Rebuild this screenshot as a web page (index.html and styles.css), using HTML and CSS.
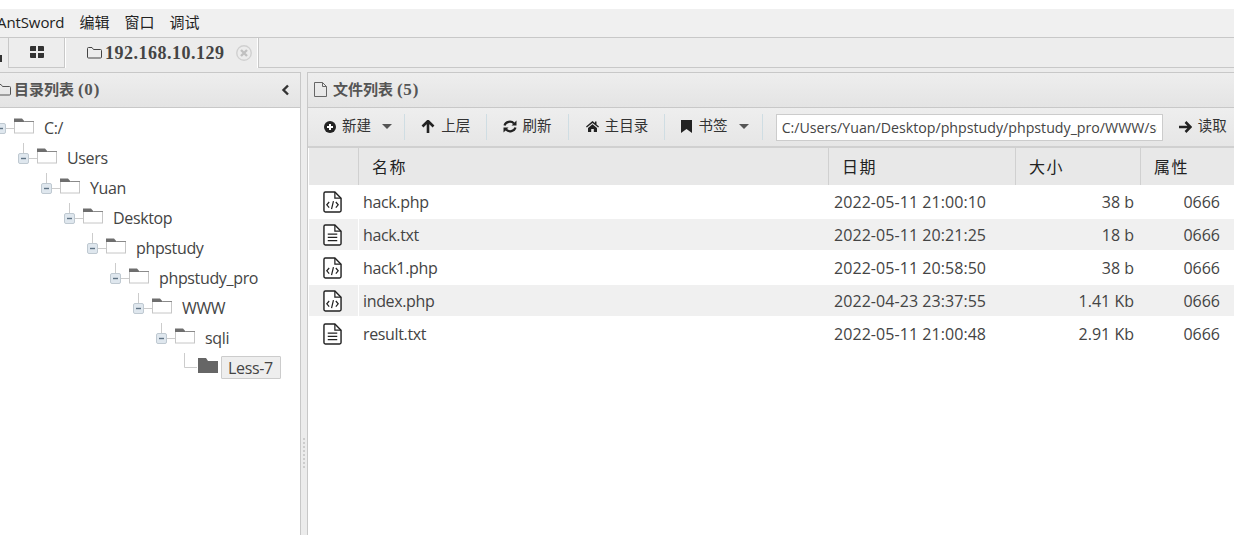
FILE: index.html
```html
<!DOCTYPE html>
<html lang="zh-CN">
<head>
<meta charset="utf-8">
<title>AntSword</title>
<link rel="stylesheet" href="styles.css">
</head>
<body>
<svg class="defs" width="0" height="0" aria-hidden="true">
  <symbol id="folder" viewBox="0 0 20 16">
    <rect x="0.500" y="3.500" width="19" height="11.500" fill="#fff" stroke="#c6c6c6"/>
    <path d="M0 4V0.500h8l3 3.500z" fill="#6e6e6e"/>
    <path d="M11 3.500h9" stroke="#8a8a8a"/>
    <path d="M1 15.500h19" stroke="#e2e2e2"/>
  </symbol>
  <symbol id="expander" viewBox="0 0 19 30">
    <path d="M5.500 0v10M10 15.500h9" stroke="#ccc" fill="none"/>
    <rect x="0.500" y="10.500" width="10" height="10" rx="1.500" fill="#dfe7ee" stroke="#bfc9d1"/>
    <path d="M3 15.500h5" stroke="#5f7384" stroke-width="1.400"/>
  </symbol>
  <symbol id="expander0" viewBox="0 0 19 30">
    <path d="M10 15.500h9" stroke="#ccc" fill="none"/>
    <rect x="0.500" y="10.500" width="10" height="10" rx="1.500" fill="#dfe7ee" stroke="#bfc9d1"/>
    <path d="M3 15.500h5" stroke="#5f7384" stroke-width="1.400"/>
  </symbol>
  <symbol id="file-code" viewBox="0 0 20 23">
    <path d="M1 2.500a1.500 1.500 0 0 1 1.500-1.500H12.500L19 7.500V20.500a1.500 1.500 0 0 1-1.500 1.500H2.500A1.500 1.500 0 0 1 1 20.500z" fill="#fff" stroke="#222" stroke-width="1.500"/>
    <path d="M12.500 1v6.500H19" fill="none" stroke="#222" stroke-width="1.300"/>
    <path d="M6.500 11.500 4 14.500l2.500 3M13.500 11.500l2.500 3-2.500 3M11 10.500l-2 8.500" fill="none" stroke="#222" stroke-width="1.300"/>
  </symbol>
  <symbol id="file-text" viewBox="0 0 20 23">
    <path d="M1 2.500a1.500 1.500 0 0 1 1.500-1.500H12.500L19 7.500V20.500a1.500 1.500 0 0 1-1.500 1.500H2.500A1.500 1.500 0 0 1 1 20.500z" fill="#fff" stroke="#222" stroke-width="1.500"/>
    <path d="M12.500 1v6.500H19" fill="none" stroke="#222" stroke-width="1.300"/>
    <path d="M5 10.500h10M5 14h10M5 17.500h10" fill="none" stroke="#222" stroke-width="1.300"/>
  </symbol>
</svg>

<header class="menubar">
  <span class="menu-item menu-app">AntSword</span>
  <span class="menu-item">编辑</span>
  <span class="menu-item">窗口</span>
  <span class="menu-item">调试</span>
</header>

<nav class="tabs">
  <div class="tab tab-stub">
    <svg class="stub-icon" width="3" height="7" viewBox="0 0 3 7"><path d="M0 0h2v7H0z" fill="#333"/></svg>
  </div>
  <div class="tab tab-grid">
    <svg width="14" height="12" viewBox="0 0 14 12"><path d="M0 1a1 1 0 0 1 1-1h5v5H0zM8 0h5a1 1 0 0 1 1 1v4H8zM0 7h6v5H1a1 1 0 0 1-1-1zM8 7h6v4a1 1 0 0 1-1 1H8z" fill="#333"/></svg>
  </div>
  <div class="tab tab-active">
    <svg class="tab-folder" width="15" height="12" viewBox="0 0 15 12"><path d="M.5 10V1.500a1 1 0 0 1 1-1h3.500l1.500 2h7a1 1 0 0 1 1 1V10a1 1 0 0 1-1 1h-12a1 1 0 0 1-1-1z" fill="none" stroke="#444"/></svg>
    <span class="tab-title">192.168.10.129</span>
    <svg class="tab-close" width="16" height="16" viewBox="0 0 16 16"><circle cx="8" cy="8" r="7.250" fill="none" stroke="#d0d0d0" stroke-width="1.400"/><path d="M5 5l6 6M11 5l-6 6" stroke="#c0c0c0" stroke-width="2.400"/></svg>
  </div>
  <div class="tab-rest"></div>
</nav>

<main class="workspace">
  <section class="tree-panel">
    <div class="panel-head tree-head">
      <svg class="head-icon" width="15" height="12" viewBox="0 0 15 12"><path d="M.5 10V1.500a1 1 0 0 1 1-1h3.500l1.500 2h7a1 1 0 0 1 1 1V10a1 1 0 0 1-1 1h-12a1 1 0 0 1-1-1z" fill="none" stroke="#555"/></svg>
      <span class="head-title">目录列表 <span class="head-count">(0)</span></span>
      <svg class="collapse" width="9" height="12" viewBox="0 0 9 12"><path d="M7 1.500 2.500 6 7 10.500" fill="none" stroke="#333" stroke-width="2.400"/></svg>
    </div>
    <ul class="tree">
      <li>
        <div class="node"><svg class="exp" width="19" height="30"><use href="#expander0"/></svg><svg class="fld" width="20" height="16"><use href="#folder"/></svg><span class="label">C:/</span></div>
        <ul><li>
          <div class="node"><svg class="exp" width="19" height="30"><use href="#expander"/></svg><svg class="fld" width="20" height="16"><use href="#folder"/></svg><span class="label">Users</span></div>
          <ul><li>
            <div class="node"><svg class="exp" width="19" height="30"><use href="#expander"/></svg><svg class="fld" width="20" height="16"><use href="#folder"/></svg><span class="label">Yuan</span></div>
            <ul><li>
              <div class="node"><svg class="exp" width="19" height="30"><use href="#expander"/></svg><svg class="fld" width="20" height="16"><use href="#folder"/></svg><span class="label">Desktop</span></div>
              <ul><li>
                <div class="node"><svg class="exp" width="19" height="30"><use href="#expander"/></svg><svg class="fld" width="20" height="16"><use href="#folder"/></svg><span class="label">phpstudy</span></div>
                <ul><li>
                  <div class="node"><svg class="exp" width="19" height="30"><use href="#expander"/></svg><svg class="fld" width="20" height="16"><use href="#folder"/></svg><span class="label">phpstudy_pro</span></div>
                  <ul><li>
                    <div class="node"><svg class="exp" width="19" height="30"><use href="#expander"/></svg><svg class="fld" width="20" height="16"><use href="#folder"/></svg><span class="label">WWW</span></div>
                    <ul><li>
                      <div class="node"><svg class="exp" width="19" height="30"><use href="#expander"/></svg><svg class="fld" width="20" height="16"><use href="#folder"/></svg><span class="label">sqli</span></div>
                      <ul><li>
                        <div class="node node-leaf">
                          <svg class="exp" width="19" height="30" viewBox="0 0 19 30"><path d="M5.500 0v14.500H18" fill="none" stroke="#ccc"/></svg>
                          <svg class="fld-solid" width="20" height="16" viewBox="0 0 20 16"><path d="M0 15V0h8l2 3h10v12z" fill="#666"/></svg>
                          <span class="label label-selected">Less-7</span>
                        </div>
                      </li></ul>
                    </li></ul>
                  </li></ul>
                </li></ul>
              </li></ul>
            </li></ul>
          </li></ul>
        </li></ul>
      </li>
    </ul>
  </section>

  <div class="splitter"><span class="grip"></span></div>

  <section class="file-panel">
    <div class="panel-head file-head">
      <svg class="head-icon" width="13" height="15" viewBox="0 0 13 15"><path d="M.5.500h8l4 4v10h-12zM8.500.500v4h4" fill="none" stroke="#666"/></svg>
      <span class="head-title">文件列表 <span class="head-count">(5)</span></span>
    </div>
    <div class="toolbar">
      <div class="tool tool-caret tool-new">
        <svg width="12" height="12" viewBox="0 0 12 12"><circle cx="6" cy="6" r="6" fill="#222"/><path d="M6 3v6M3 6h6" stroke="#fff" stroke-width="2"/></svg>
        <span>新建</span><i class="caret"></i>
      </div>
      <div class="tool">
        <svg width="14" height="13" viewBox="0 0 14 13"><path d="M7 1v12M1.500 6.500 7 1l5.500 5.500" fill="none" stroke="#222" stroke-width="2.600"/></svg>
        <span>上层</span>
      </div>
      <div class="tool tool-refresh">
        <svg width="14" height="13" viewBox="0 0 14 13"><path d="M1.500 5.500A5.500 5 0 0 1 11 3.500M12.500 7.500A5.500 5 0 0 1 3 9.500" fill="none" stroke="#222" stroke-width="2.200"/><path d="M13.500.500v5h-5zM.5 12.500v-5h5z" fill="#222"/></svg>
        <span>刷新</span>
      </div>
      <div class="tool tool-home">
        <svg width="13" height="11" viewBox="0 0 13 11"><path d="M6.500 0 0 5.500l.8 1L6.500 2l5.700 4.500.8-1L10.500 3.400V.5H9v1.600z" fill="#222"/><path d="M2 7 6.500 3.200 11 7v4H7.800V8H5.200v3H2z" fill="#222"/></svg>
        <span>主目录</span>
      </div>
      <div class="tool tool-caret">
        <svg width="11" height="13" viewBox="0 0 11 13"><path d="M0 0h11v13L5.500 9 0 13z" fill="#222"/></svg>
        <span>书签</span><i class="caret"></i>
      </div>
      <input class="path" type="text" value="C:/Users/Yuan/Desktop/phpstudy/phpstudy_pro/WWW/sqli/Less-7/">
      <div class="tool tool-read">
        <svg width="13" height="12" viewBox="0 0 13 12"><path d="M0 6h11M6.500 1l5 5-5 5" fill="none" stroke="#222" stroke-width="2.500"/></svg>
        <span>读取</span>
      </div>
    </div>
    <div class="grid">
      <div class="row row-head">
        <div class="cell"></div>
        <div class="cell cell-h">名称</div>
        <div class="cell cell-h">日期</div>
        <div class="cell cell-h">大小</div>
        <div class="cell cell-h">属性</div>
      </div>
      <div class="row">
        <div class="cell cell-icon"><svg width="19" height="22"><use href="#file-code"/></svg></div>
        <div class="cell cell-name">hack.php</div><div class="cell cell-date">2022-05-11 21:00:10</div><div class="cell cell-size">38 b</div><div class="cell cell-attr">0666</div>
      </div>
      <div class="row row-alt">
        <div class="cell cell-icon"><svg width="19" height="22"><use href="#file-text"/></svg></div>
        <div class="cell cell-name">hack.txt</div><div class="cell cell-date">2022-05-11 20:21:25</div><div class="cell cell-size">18 b</div><div class="cell cell-attr">0666</div>
      </div>
      <div class="row">
        <div class="cell cell-icon"><svg width="19" height="22"><use href="#file-code"/></svg></div>
        <div class="cell cell-name">hack1.php</div><div class="cell cell-date">2022-05-11 20:58:50</div><div class="cell cell-size">38 b</div><div class="cell cell-attr">0666</div>
      </div>
      <div class="row row-alt">
        <div class="cell cell-icon"><svg width="19" height="22"><use href="#file-code"/></svg></div>
        <div class="cell cell-name">index.php</div><div class="cell cell-date">2022-04-23 23:37:55</div><div class="cell cell-size">1.41 Kb</div><div class="cell cell-attr">0666</div>
      </div>
      <div class="row">
        <div class="cell cell-icon"><svg width="19" height="22"><use href="#file-text"/></svg></div>
        <div class="cell cell-name">result.txt</div><div class="cell cell-date">2022-05-11 21:00:48</div><div class="cell cell-size">2.91 Kb</div><div class="cell cell-attr">0666</div>
      </div>
    </div>
  </section>
</main>
</body>
</html>
```
FILE: styles.css
```css
* { box-sizing: border-box; }
html, body { margin: 0; height: 100%; }
body {
  width: 1234px;
  height: 535px;
  overflow: hidden;
  display: flex;
  flex-direction: column;
  padding-top: 9px;
  background: #fff;
  color: #333;
  font-family: "Open Sans", "Noto Sans CJK SC", sans-serif;
  font-size: 16px;
}
.defs { position: absolute; }

.menubar {
  height: 29px;
  flex: none;
  display: flex;
  align-items: center;
  gap: 15px;
  padding-bottom: 3px;
  background: #f0f0f0;
  border-bottom: 1px solid #c8c8c8;
  font-size: 15px;
  color: #222;
}
.menu-app { margin-left: -3px; letter-spacing: -.1px; }

.tabs {
  height: 30px;
  flex: none;
  display: flex;
  background: #ededed;
}
.tab { display: flex; align-items: center; border-bottom: 1px solid #c8c8c8; }
.tab-stub { width: 9px; border-right: 1px solid #c8c8c8; border-bottom: none; padding-top: 10px; }
.tab-grid { width: 56px; justify-content: center; border-right: 1px solid #c8c8c8; padding-bottom: 1px; }
.tab-active {
  width: 193px;
  padding-left: 21px;
  border-bottom: none;
  border-right: 1px solid #fff;
  border-left: 1px solid #fff;
  background: #ececec;
  position: relative;
}
.tab-folder { flex: none; margin-top: -1px; }
.tab-title {
  margin-left: 3px;
  font-family: "Liberation Serif", serif;
  font-weight: 700;
  font-size: 18px;
  letter-spacing: .5px;
  color: #444;
  white-space: nowrap;
}
.tab-close { flex: none; margin-left: 11px; }
.tab-rest { flex: 1; border-bottom: 1px solid #c8c8c8; border-left: 1px solid #c8c8c8; }

.workspace {
  flex: 1;
  min-height: 0;
  display: flex;
  padding-top: 4px;
  background: linear-gradient(#ececec, #ececec) top / 100% 4px no-repeat, #fff;
}

.panel-head {
  height: 36px;
  flex: none;
  display: flex;
  align-items: center;
  background: linear-gradient(#eeeeee, #e4e4e4);
  border-top: 1px solid #c8c8c8;
  border-bottom: 1px solid #c8c8c8;
}
.head-title { font-size: 15px; font-weight: 700; color: #555; white-space: nowrap; padding-bottom: 3px; }
.head-count { font-family: "Liberation Serif", serif; font-size: 17px; letter-spacing: .8px; }

.tree-panel { width: 301px; flex: none; display: flex; flex-direction: column; border-right: 1px solid #c8c8c8; }
.tree-head { padding-left: 0; margin-left: -4px; }
.tree-head .head-icon { margin-right: 3px; margin-top: -1px; }
.collapse { margin-left: auto; margin-right: 10px; }

.tree, .tree ul { list-style: none; margin: 0; padding: 0; }
.tree { padding-top: 5px; margin-left: -5px; }
.tree ul { margin-left: 23px; }
.node { height: 30px; display: flex; align-items: center; font-size: 16px; letter-spacing: -.35px; color: #444; white-space: nowrap; }
.exp { flex: none; }
.fld, .fld-solid { flex: none; }
.fld { margin-top: -4px; }
.fld-solid { margin-top: -5px; }
.label { margin-left: 10px; }
.label-selected {
  margin-left: 3px;
  height: 23px;
  margin-top: -1px;
  padding: 0 7px 0 6px;
  display: flex;
  align-items: center;
  background: #eeeeee;
  border: 1px solid #ccc;
  border-radius: 1px;
}

.splitter { width: 7px; flex: none; background: #ececec; display: flex; align-items: flex-end; justify-content: center; border-right: 1px solid #c8c8c8; }
.grip {
  width: 2px;
  height: 30px;
  margin-bottom: 67px;
  background: repeating-linear-gradient(#cdcdcd 0 2px, transparent 2px 4px);
}

.file-panel { flex: 1; min-width: 0; display: flex; flex-direction: column; }
.file-head { padding-left: 6px; }
.file-head .head-icon { margin-right: 6px; margin-top: -2px; }

.toolbar {
  height: 40px;
  flex: none;
  display: flex;
  align-items: center;
  background: linear-gradient(#eeeeee, #e6e6e6);
  border-bottom: 2px solid #d0d0d0;
  font-size: 14.5px;
  padding-left: 0;
}
.tool {
  height: 26px;
  display: flex;
  align-items: center;
  gap: 6px;
  padding: 0 16px 1px 16px;
  border-right: 1px solid #cfdde3;
  color: #333;
  white-space: nowrap;
}
.tool span { letter-spacing: .1px; padding-bottom: 4px; }
.tool-caret { padding-right: 13px; }
.tool-new { padding-right: 12px; }
.tool-refresh { gap: 5px; }
.tool-home { padding-left: 17px; }
.caret {
  width: 0;
  height: 0;
  margin-left: 5px;
  border-left: 5px solid transparent;
  border-right: 5px solid transparent;
  border-top: 5px solid #555;
}
.tool-read { border-right: none; padding-left: 16px; padding-right: 0; }
.path {
  width: 387px;
  height: 27px;
  flex: none;
  margin-left: 13px;
  padding: 0 5px;
  border: 1px solid #ccc;
  background: #fff;
  font: 14.2px "Open Sans", sans-serif;
  color: #444;
  outline: none;
}

.grid { margin-left: 1px; }
.row {
  display: grid;
  grid-template-columns: 50px 470px 187px 125px 93px;
  height: 33px;
  align-items: stretch;
}
.row-head {
  height: 37px;
  background: #e8e8e8;
  font-size: 16px;
}
.row-alt { background: #f0f0f0; border-top: 1px solid #fff; border-bottom: 1px solid #fff; }
.cell { display: flex; align-items: center; padding-left: 5px; color: #444; white-space: nowrap; }
.row-head .cell { border-right: 1px solid #d0d0d0; color: #222; }
.row-head .cell:last-child { border-right: none; }
.cell-h { padding: 0 0 2px 13px; letter-spacing: 1.500px; }
.cell-icon { padding-left: 14px; border-right: 1px solid #fff; }
.cell-name { letter-spacing: -.35px; padding-left: 4px; }
.cell-date { letter-spacing: .06px; }
.cell-size { justify-content: flex-end; padding-right: 7px; }
.cell-attr { justify-content: flex-end; padding-right: 14px; }
```
